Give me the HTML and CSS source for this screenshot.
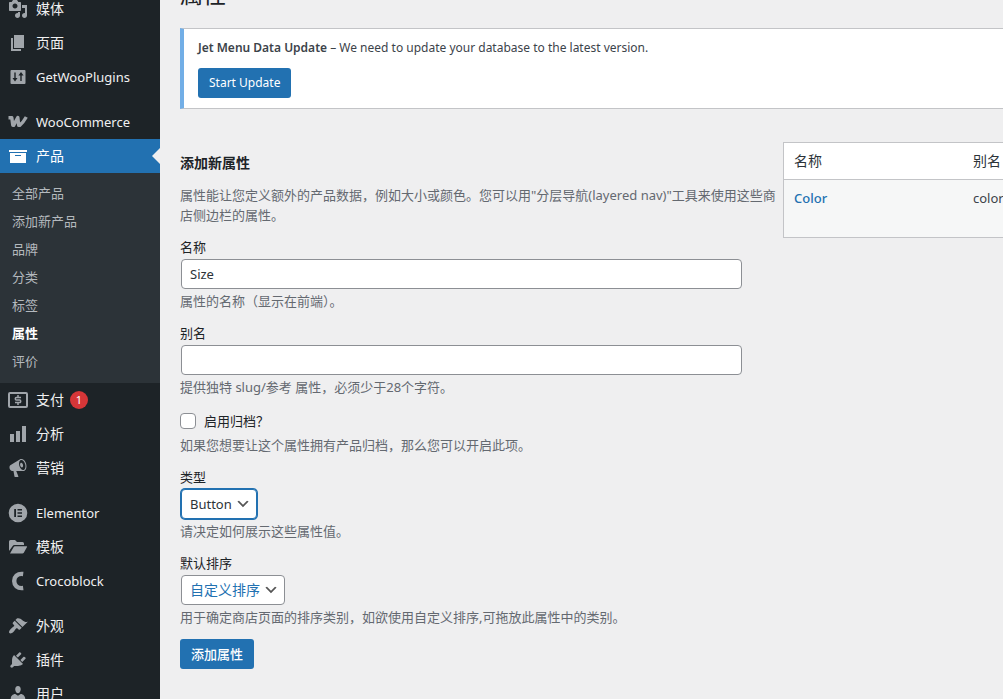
FILE: index.html
```html
<!DOCTYPE html>
<html lang="zh-CN">
<head>
<meta charset="utf-8">
<title>属性</title>
<link rel="stylesheet" href="styles.css">
</head>
<body>
<div class="layout">
  <nav class="sidebar" aria-label="主菜单">
    <ul class="menu">
      <li><a class="menu-link" href="#"><svg class="icon" viewBox="0 0 20 20"><path d="M13 11V4c0-.55-.45-1-1-1h-1.67L9 1H5L3.67 3H2c-.55 0-1 .45-1 1v7c0 .55.45 1 1 1h10c.55 0 1-.45 1-1zM7 4.5c1.38 0 2.5 1.12 2.5 2.5S8.38 9.5 7 9.5 4.5 8.38 4.5 7 5.62 4.5 7 4.5zM14 6h5v10.5c0 1.38-1.12 2.5-2.5 2.5S14 17.88 14 16.5s1.12-2.5 2.5-2.5c.17 0 .34.02.5.05V9h-3V6zm-4 8.05V13h2v3.5c0 1.38-1.12 2.5-2.5 2.5S7 17.88 7 16.5 8.12 14 9.5 14c.17 0 .34.02.5.05z"/></svg>媒体</a></li>
      <li><a class="menu-link" href="#"><svg class="icon" viewBox="0 0 20 20"><path d="M6 15V2h10v13H6zm-1 1h8v2H3V5h2v11z"/></svg>页面</a></li>
      <li><a class="menu-link latin" href="#"><svg class="icon" viewBox="0 0 20 20"><path fill-rule="evenodd" d="M3.5 3h13q1 0 1 1v12q0 1-1 1h-13q-1 0-1-1V4q0-1 1-1zM6.300 5.500v5.500H4.500l2.500 3.500 2.500-3.500H7.700V5.500zM13 5l-2.600 3.500h1.900V14h1.400V8.500h1.900z"/></svg>GetWooPlugins</a></li>
      <li class="group-start"><a class="menu-link latin" href="#"><svg class="icon" viewBox="0 0 20 20"><path class="stroke" d="M.5 5.800H3.800L4.800 13.400H5.600L9.800 5.500L10.700 13.400H11.700Q15 10.800 18.300 5" stroke-width="3.400"/></svg>WooCommerce</a></li>
      <li class="current">
        <a class="menu-link" href="#"><svg class="icon" viewBox="0 0 20 20"><path d="M19 4v2H1V4h18zM2 7h16v10H2V7zm11 3V9H7v1h6z"/></svg>产品</a>
        <ul class="submenu">
          <li><a href="#">全部产品</a></li>
          <li><a href="#">添加新产品</a></li>
          <li><a href="#">品牌</a></li>
          <li><a href="#">分类</a></li>
          <li><a href="#">标签</a></li>
          <li><a class="active" href="#">属性</a></li>
          <li><a href="#">评价</a></li>
        </ul>
      </li>
      <li><a class="menu-link" href="#"><svg class="icon" viewBox="0 0 20 20"><rect class="stroke" x="1" y="3" width="18" height="14" rx="1" stroke-width="2"/><path class="stroke" d="M13 7.500H8.300Q7.300 7.500 7.300 8.700T8.300 10H11.700Q12.700 10 12.700 11.300T11.700 12.500H7M10 5V7.500M10 12.500V15" stroke-width="1.500"/></svg>支付<span class="badge">1</span></a></li>
      <li><a class="menu-link" href="#"><svg class="icon" viewBox="0 0 20 20"><path d="M18 18V2h-4v16h4zm-6 0V7H8v11h4zm-6 0v-8H2v8h4z"/></svg>分析</a></li>
      <li><a class="menu-link" href="#"><svg class="icon" viewBox="0 0 20 20"><path d="M18.150 5.940c.46 1.620.38 3.220-.02 4.480-.42 1.280-1.260 2.180-2.300 2.480-.16.060-.26.060-.4.060-.06.020-.12.020-.18.020-.06.020-.14.020-.22.020h-6.800l2.220 5.500c.02.14-.06.26-.14.34-.08.1-.24.16-.34.16H6.950c-.1 0-.26-.06-.34-.16-.08-.08-.16-.2-.14-.34l-1-5.500H4.250l-.02-.02c-.5.060-1.080-.18-1.540-.62s-.88-1.080-1.060-1.880c-.24-.8-.2-1.560-.02-2.200.18-.62.58-1.080 1.060-1.300l.02-.02 9-5.400c.1-.06.18-.1.24-.16.060-.04.14-.08.24-.12.16-.08.28-.12.5-.18 1.040-.3 2.240.1 3.220.98s1.840 2.240 2.260 3.860zm-2.580 5.980h-.02c.4-.1.74-.34 1.040-.7.58-.7.86-1.760.86-3.040 0-.64-.1-1.300-.28-1.980-.34-1.360-1.020-2.500-1.780-3.240s-1.680-1.100-2.460-.88c-.82.22-1.400.96-1.700 2-.32 1.040-.28 2.360.06 3.720.38 1.360 1 2.500 1.800 3.240.78.74 1.620 1.100 2.480.88zm-2.540-7.080c.22-.04.42-.02.62.04.38.16.76.48 1.020 1s.42 1.200.42 1.780c0 .3-.04.56-.12.8-.18.48-.44.84-.86.94-.34.1-.8-.06-1.140-.4s-.64-.86-.78-1.500c-.18-.62-.12-1.240.02-1.720s.48-.84.82-.94z"/></svg>营销</a></li>
      <li class="group-start"><a class="menu-link latin" href="#"><svg class="icon" viewBox="0 0 20 20"><path fill-rule="evenodd" d="M10 .7a9.300 9.300 0 1 0 0 18.600A9.300 9.300 0 0 0 10 .7zM6.200 6H8v8H6.200zM9.500 6H14v1.600H9.500zM9.500 9.200H14v1.600H9.500zM9.500 12.400H14V14H9.500z"/></svg>Elementor</a></li>
      <li><a class="menu-link" href="#"><svg class="icon" viewBox="0 0 20 20"><path d="M1 14V4.500Q1 3 2.500 3H7l2 2h5.500Q16 5 16 6.500V8H6.500Q5.200 8 4.500 9.200zM2 16.500L5.700 10Q6.100 9.200 7 9.200h11.500q1 0 .5.900l-3.200 5.600q-.5.800-1.400.8z"/></svg>模板</a></li>
      <li><a class="menu-link latin" href="#"><svg class="icon" viewBox="0 0 20 20"><path class="stroke" d="M15.200 3C3.200 1.400 3.200 18.600 15.200 17" stroke-width="4.400"/></svg>Crocoblock</a></li>
      <li class="group-start"><a class="menu-link" href="#"><svg class="icon" viewBox="0 0 20 20"><path d="M14.480 11.060L7.410 3.990l1.500-1.500c.5-.56 2.300-.47 3.510.32 1.210.8 1.430 1.280 2.910 2.100 1.180.64 2.450 1.260 4.450.85zm-.71.71L6.700 4.700 4.930 6.470c-.39.39-.39 1.020 0 1.410l1.060 1.060c.39.39.39 1.030 0 1.420-.6.6-1.430 1.110-2.210 1.690-.35.26-.7.53-1.010.84C1.430 14.230.4 16.080 1.400 17.070c.99 1 2.840-.03 4.180-1.360.31-.31.58-.66.85-1.020.57-.78 1.080-1.610 1.690-2.210.39-.39 1.020-.39 1.410 0l1.060 1.060c.39.39 1.020.39 1.410 0z"/></svg>外观</a></li>
      <li><a class="menu-link" href="#"><svg class="icon" viewBox="0 0 20 20"><path d="M13.110 4.360L9.870 7.600 8 5.730l3.240-3.240c.35-.34 1.050-.2 1.560.32.52.51.66 1.210.31 1.550zm-8 1.770l.91-1.120 9.010 9.010-1.190.84c-.71.71-2.630 1.160-3.820 1.160H6.140L4.900 17.260c-.59.59-1.540.59-2.120 0-.59-.58-.59-1.530 0-2.120l1.240-1.240v-3.880c0-1.130.4-3.190 1.090-3.890zm7.260 3.970l3.240-3.240c.34-.35 1.040-.21 1.550.31.52.51.66 1.210.31 1.550l-3.240 3.250z"/></svg>插件</a></li>
      <li><a class="menu-link" href="#"><svg class="icon" viewBox="0 0 20 20"><path d="M10 9.250c-2.270 0-2.730-3.440-2.730-3.440C7 4.020 7.820 2 9.970 2c2.160 0 2.980 2.020 2.710 3.810 0 0-.41 3.440-2.680 3.440zm0 2.570L12.720 10c2.390 0 4.520 2.330 4.520 4.530v2.490s-3.650 1.130-7.240 1.130c-3.650 0-7.240-1.130-7.240-1.130v-2.490c0-2.250 1.940-4.480 4.470-4.480z"/></svg>用户</a></li>
    </ul>
  </nav>

  <main class="content">
    <h1 class="page-title">属性</h1>
    <section class="notice">
      <p class="notice-text"><strong>Jet Menu Data Update</strong> – We need to update your database to the latest version.</p>
      <button class="button" type="button">Start Update</button>
    </section>

    <div class="columns">
      <form class="attribute-form">
        <h2 class="form-title">添加新属性</h2>
        <p class="hint intro">属性能让您定义额外的产品数据，例如大小或颜色。您可以用"分层导航(layered nav)"工具来使用这些商店侧边栏的属性。</p>
        <div class="field">
          <label for="name">名称</label>
          <input class="text-input" id="name" type="text" value="Size">
          <p class="hint">属性的名称（显示在前端）。</p>
        </div>
        <div class="field">
          <label for="slug">别名</label>
          <input class="text-input" id="slug" type="text">
          <p class="hint">提供独特 slug/参考 属性，必须少于28个字符。</p>
        </div>
        <div class="field">
          <label class="check-label" for="archive"><input class="checkbox" id="archive" type="checkbox">启用归档？</label>
          <p class="hint">如果您想要让这个属性拥有产品归档，那么您可以开启此项。</p>
        </div>
        <div class="field">
          <label for="type">类型</label>
          <select class="select select-focused" id="type"><option>Button</option></select>
          <p class="hint">请决定如何展示这些属性值。</p>
        </div>
        <div class="field">
          <label for="order">默认排序</label>
          <select class="select select-link" id="order"><option>自定义排序</option></select>
          <p class="hint">用于确定商店页面的排序类别，如欲使用自定义排序,可拖放此属性中的类别。</p>
        </div>
        <button class="button button-submit" type="submit">添加属性</button>
      </form>

      <table class="attributes">
        <thead><tr><th scope="col">名称</th><th scope="col">别名</th></tr></thead>
        <tbody><tr><td><a href="#">Color</a></td><td>color</td></tr></tbody>
      </table>
    </div>
  </main>
</div>
</body>
</html>
```
FILE: styles.css
```css
* {
  box-sizing: border-box;
}

body {
  margin: 0;
  overflow: hidden;
  background: #efeff0;
  color: #3c434a;
  font: 13px/20px "Noto Sans", "Noto Sans CJK SC", sans-serif;
}

h1, h2, p, ul {
  margin: 0;
  padding: 0;
}

ul {
  list-style: none;
}

a {
  text-decoration: none;
}

.layout {
  display: flex;
  height: 100vh;
}

/* Sidebar */
.sidebar {
  flex: 0 0 160px;
  overflow: hidden;
  background: #1d2327;
}

.menu {
  margin-top: -8px;
}

.group-start {
  margin-top: 11px;
}

.menu-link {
  display: flex;
  align-items: center;
  gap: 8px;
  height: 34px;
  padding-left: 8px;
  color: #f0f0f1;
  font-size: 14px;
}

.menu-link.latin {
  font-size: 13px;
}

.icon {
  width: 20px;
  height: 20px;
  fill: #a0a5aa;
}

.icon .stroke {
  fill: none;
  stroke: #a0a5aa;
  stroke-linejoin: round;
}

.badge {
  width: 18px;
  height: 18px;
  margin-left: -2px;
  border-radius: 9px;
  background: #d63638;
  color: #fff;
  font-size: 11px;
  line-height: 18px;
  text-align: center;
}

.current .menu-link {
  position: relative;
  background: #2271b1;
  color: #fff;
}

.current .icon {
  fill: #fff;
}

.current .menu-link::after {
  content: "";
  position: absolute;
  top: 9px;
  right: 0;
  border: 8px solid transparent;
  border-left-width: 0;
  border-right-color: #efeff0;
}

.submenu {
  padding: 6px 0 8px;
  background: #2c3338;
}

.submenu a {
  display: block;
  padding: 4px 12px;
  color: #b4b9be;
}

.submenu .active {
  color: #fff;
  font-weight: 700;
}

/* Main area */
.content {
  flex: 1;
  min-width: 0;
  margin-top: -21px;
  padding-left: 20px;
  overflow: hidden;
}

.page-title {
  margin-bottom: 19px;
  color: #1d2327;
  font-size: 23px;
  font-weight: 400;
  line-height: 30px;
}

.notice {
  margin-bottom: 33px;
  padding: 9px 14px 10px;
  border: 1px solid #c3c4c7;
  border-right: 0;
  border-left: 4px solid #72aee6;
  background: #fff;
  font-size: 12px;
}

.notice-text {
  margin-bottom: 10px;
}

.notice-text strong {
  font-weight: 600;
}

.button {
  display: block;
  height: 30px;
  padding: 0 11px;
  border: 0;
  border-radius: 3px;
  background: #2271b1;
  color: #fff;
  font: inherit;
}

.button-submit {
  font-weight: 500;
}

.columns {
  display: flex;
  align-items: flex-start;
  gap: 12px;
}

.attribute-form {
  display: flex;
  flex: 0 0 591px;
  flex-direction: column;
  align-items: flex-start;
  gap: 12px;
  padding-top: 11px;
}

.form-title {
  color: #1d2327;
  font-size: 14px;
  font-weight: 700;
  line-height: 20px;
}

.hint {
  color: #646970;
}

.intro {
  margin-right: -8px;
}

.field {
  display: flex;
  flex-direction: column;
  align-items: flex-start;
  gap: 2px;
  width: 100%;
  color: #1d2327;
}

.text-input,
.select {
  height: 30px;
  margin: 0 1px;
  padding: 0 8px;
  border: 1px solid #8c8f94;
  border-radius: 4px;
  background: #fff;
  color: #2c3338;
  font: inherit;
}

.text-input {
  width: 95%;
}

.select {
  padding-right: 24px;
  appearance: none;
  background: #fff url("data:image/svg+xml,%3Csvg xmlns='http://www.w3.org/2000/svg' viewBox='0 0 20 20'%3E%3Cpath d='M5 6l5 5 5-5 2 1-7 7-7-7 2-1z' fill='%23555'/%3E%3C/svg%3E") no-repeat right 5px center / 16px 16px;
}

.select-focused {
  border-color: #2271b1;
  box-shadow: 0 0 0 1px #2271b1;
}

.select-link {
  color: #2271b1;
  font-size: 14px;
}

.check-label {
  display: flex;
  align-items: center;
  gap: 8px;
  height: 24px;
}

.checkbox {
  appearance: none;
  width: 16px;
  height: 16px;
  margin: 0;
  border: 1px solid #8c8f94;
  border-radius: 4px;
  background: #fff;
}

/* Attribute list */
.attributes {
  flex: 0 0 560px;
  border: 1px solid #c3c4c7;
  border-spacing: 0;
  background: #fff;
  table-layout: fixed;
}

.attributes th,
.attributes td {
  padding: 8px 10px;
  text-align: left;
  vertical-align: top;
}

.attributes th {
  height: 37px;
  border-bottom: 1px solid #c3c4c7;
  color: #2c3338;
  font-size: 14px;
  font-weight: 400;
}

.attributes th:first-child {
  width: 179px;
}

.attributes td {
  height: 57px;
  background: #f6f7f7;
}

.attributes a {
  color: #2271b1;
  font-weight: 500;
}
```
